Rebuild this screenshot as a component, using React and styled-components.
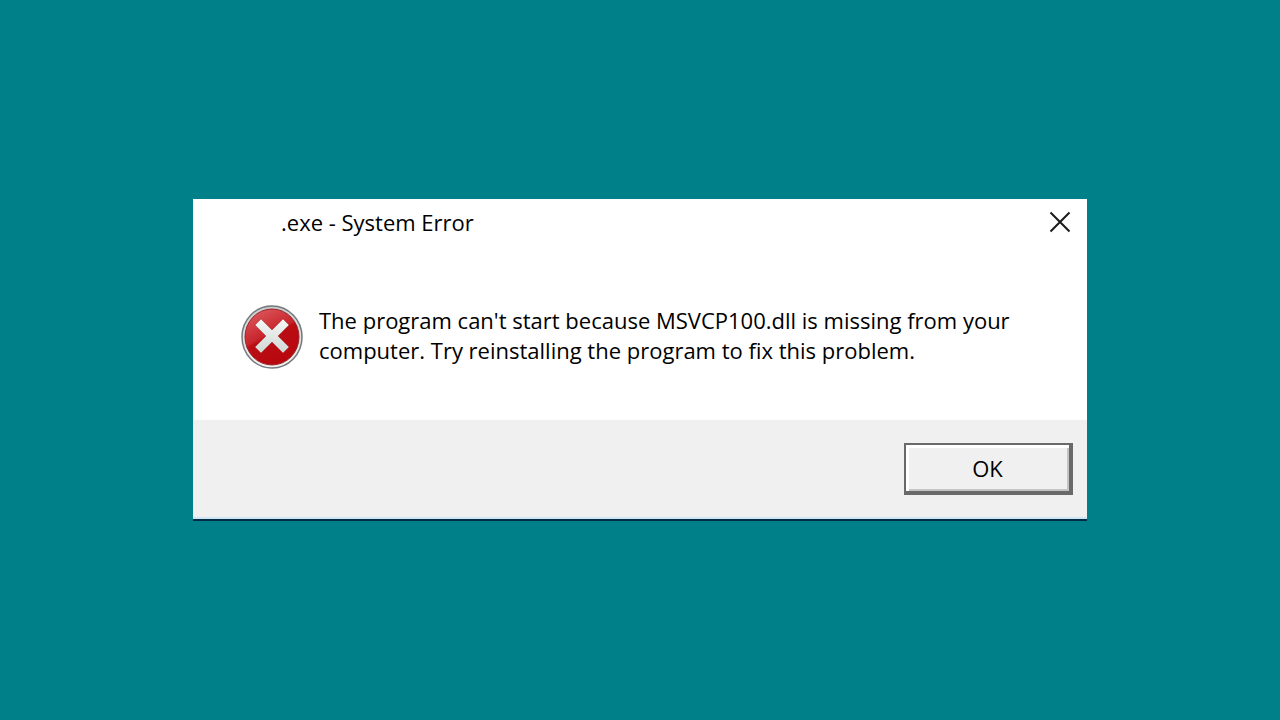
import React from 'react';
import styled, {createGlobalStyle} from "styled-components";

const GlobalStyle = createGlobalStyle`
  *{
    box-sizing: border-box;
    margin: 0;
    padding: 0;
  }
  body{
    background-color: #008088;
    color: #000;
    font-family: "Open Sans", "Noto Sans", sans-serif;
  }
`
const Desktop = styled.main`
  min-height: 100vh;
  padding: 24px;
  display: flex;
  justify-content: center;
  align-items: center;
`
const Dialog = styled.section`
  width: 100%;
  max-width: 894px;
  background-color: #fff;
  border-bottom: 2px solid #062c45;
`
const TitleBar = styled.header`
  display: flex;
  justify-content: space-between;
  align-items: center;
  padding: 0 8px 0 88px;
`
const Title = styled.h1`
  font-size: 22px;
  line-height: 46px;
  font-weight: 400;
`
const CloseButton = styled.button`
  display: flex;
  padding: 8px;
  border: none;
  background: none;
`
const Body = styled.div`
  display: flex;
  align-items: flex-start;
  gap: 16px;
  padding: 60px 24px 51px 48px;
`
const ErrorBadge = styled.svg`
  flex-shrink: 0;
`
const Message = styled.p`
  font-size: 22px;
  line-height: 30px;
`
const Footer = styled.footer`
  display: flex;
  justify-content: flex-end;
  padding: 23px 14px 22px;
  background-color: #f0f0f0;
  border-bottom: 2px solid #cfe6f2;
`
const PushButton = styled.button`
  width: 169px;
  height: 52px;
  border: 2px solid #696969;
  border-right-width: 4px;
  border-bottom-width: 4px;
  background-color: #f0f0f0;
  box-shadow: inset 3px 3px #fff, inset -2px -2px #c4c4c4;
  color: #000;
  font-family: inherit;
  font-size: 22px;
`

const CloseIcon = () => (
    <svg width="22" height="22" viewBox="0 0 22 22" aria-hidden="true">
        <path d="M1.5 1.5L20.5 20.5M20.5 1.5L1.5 20.5" stroke="#1a1a1a" strokeWidth="2" fill="none"/>
    </svg>
);

const ErrorIcon = () => (
    <ErrorBadge width="62" height="64" viewBox="0 0 62 64" role="img" aria-label="Error">
        <defs>
            <linearGradient id="rim" x1="0" y1="0" x2="0" y2="1">
                <stop offset="0" stopColor="#c9cccd"/>
                <stop offset="1" stopColor="#f2f5f5"/>
            </linearGradient>
            <linearGradient id="red" x1="0.2" y1="0" x2="0.7" y2="1">
                <stop offset="0" stopColor="#dc5a5f"/>
                <stop offset="0.45" stopColor="#c8242b"/>
                <stop offset="0.5" stopColor="#b90d14"/>
                <stop offset="1" stopColor="#b8070d"/>
            </linearGradient>
            <linearGradient id="cross" x1="0" y1="0" x2="0" y2="1">
                <stop offset="0" stopColor="#f6f6f6"/>
                <stop offset="1" stopColor="#d0d8d4"/>
            </linearGradient>
        </defs>
        <ellipse cx="31" cy="32" rx="30" ry="31" fill="url(#rim)" stroke="#74797b" strokeWidth="1.5"/>
        <ellipse cx="31" cy="32" rx="27" ry="28" fill="url(#red)" stroke="#9c2327"/>
        <path
            d="M20 14L31 25L42 14L48 20L37 31L48 42L42 48L31 37L20 48L14 42L25 31L14 20Z"
            fill="url(#cross)"
            stroke="#a53b3d"
            strokeWidth="0.5"
            strokeLinejoin="round"
        />
    </ErrorBadge>
);

const App = () => {
    return (
        <>
            <GlobalStyle/>
            <Desktop>
                <Dialog role="alertdialog" aria-labelledby="title" aria-describedby="message">
                    <TitleBar>
                        <Title id="title">.exe - System Error</Title>
                        <CloseButton type="button" aria-label="Close"><CloseIcon/></CloseButton>
                    </TitleBar>
                    <Body>
                        <ErrorIcon/>
                        <Message id="message">
                            The program can't start because MSVCP100.dll is missing from your computer. Try reinstalling the program to fix this problem.
                        </Message>
                    </Body>
                    <Footer>
                        <PushButton type="button">OK</PushButton>
                    </Footer>
                </Dialog>
            </Desktop>
        </>
    );
};

export default App;
